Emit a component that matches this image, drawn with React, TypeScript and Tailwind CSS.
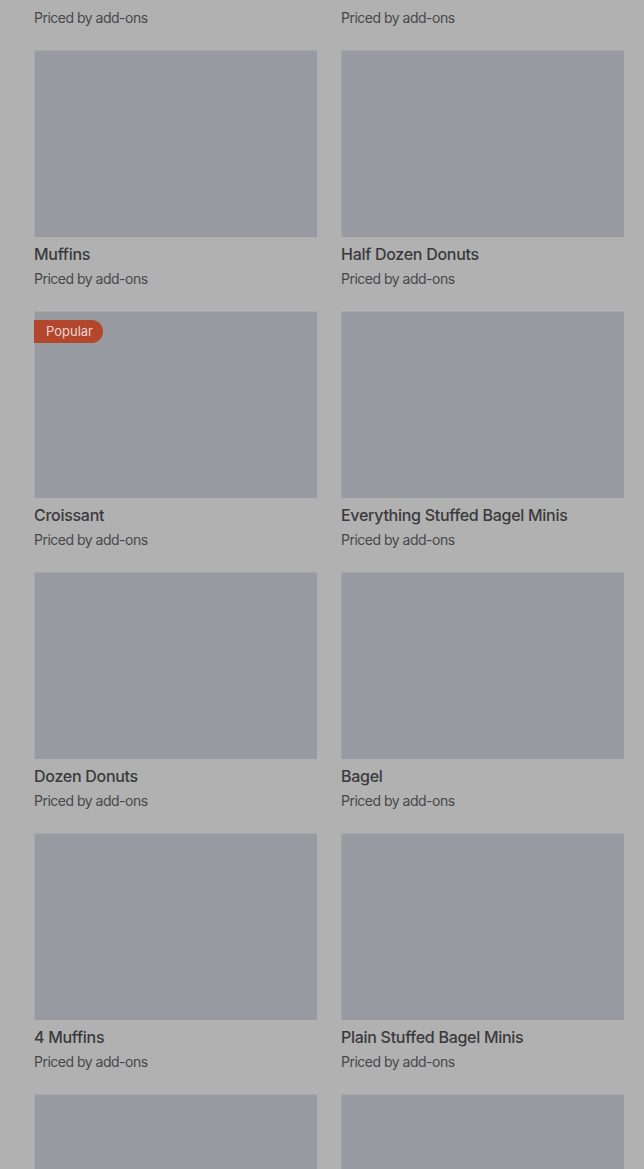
const items = [
  { name: 'Glazed Donut' },
  { name: 'Cinnamon Roll' },
  { name: 'Muffins' },
  { name: 'Half Dozen Donuts' },
  { name: 'Croissant', popular: true },
  { name: 'Everything Stuffed Bagel Minis' },
  { name: 'Dozen Donuts' },
  { name: 'Bagel' },
  { name: '4 Muffins' },
  { name: 'Plain Stuffed Bagel Minis' },
  { name: 'Cookies' },
  { name: 'Danish' },
];

const MenuCard = ({ item }: { item: { name: string; popular?: boolean } }) => (
  <div className="flex flex-col">
    <div className="relative h-[187px] bg-[#989aa1] border-t border-l border-[#a6a7aa]">
      {item.popular && (
        <span className="absolute -left-px top-2 h-[23px] flex items-center pl-3 pr-[10px] rounded-r-full bg-[#b3472e] text-[13px] text-[#eed6cf]">
          Popular
        </span>
      )}
    </div>
    <h3 className="mt-[5px] text-[16px] leading-6 font-medium text-[#3a3a3c] tracking-[-0.28px]">{item.name}</h3>
    <p className="mt-[3px] text-[14px] leading-5 text-[#48484a] tracking-[-0.5px]">Priced by add-ons</p>
  </div>
);

export default function App() {
  return (
    <div
      className="h-[1169px] overflow-hidden bg-[#b1b1b1]"
      style={{ fontFamily: 'Inter, "Noto Sans", sans-serif' }}
    >
      <div className="grid grid-cols-2 gap-x-6 gap-y-[22px] pl-[34px] pr-5 -mt-[211px]">
        {items.map((item) => (
          <MenuCard key={item.name} item={item} />
        ))}
      </div>
    </div>
  );
}
